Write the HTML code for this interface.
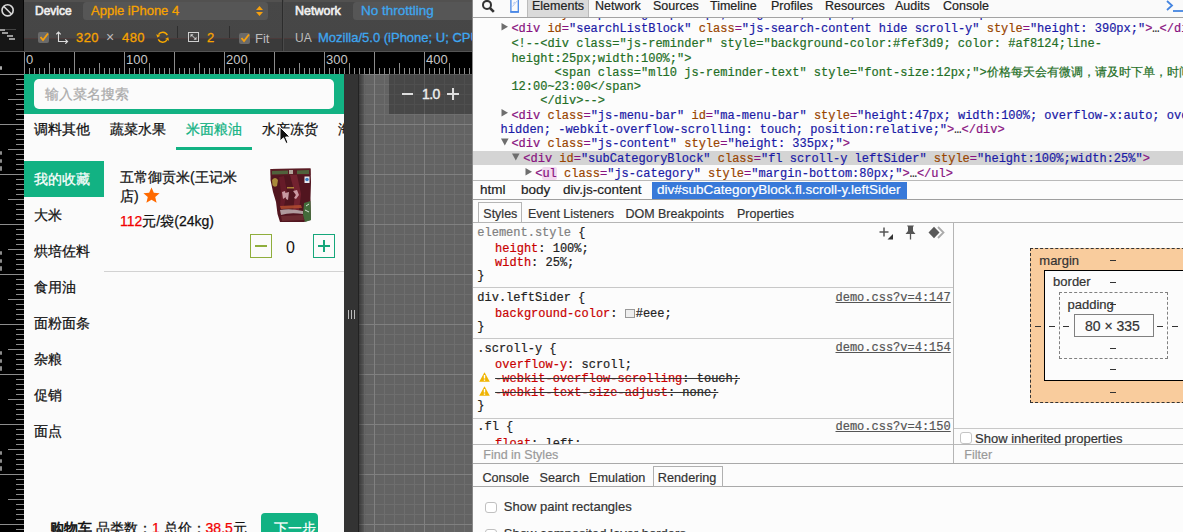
<!DOCTYPE html>
<html><head><meta charset="utf-8">
<style>
*{box-sizing:border-box}
html,body{margin:0;padding:0;width:1183px;height:532px;overflow:hidden;background:#fff;font-family:"Liberation Sans",sans-serif}
.a{position:absolute}
.mono{font-family:"Liberation Mono",monospace}
/* left panel */
#lstrip{left:0;top:0;width:24px;height:51px;background:#161616;border-right:1px solid #050505}
#rc0{left:0;top:52px;width:24px;height:22px;background:#000}
#tb{left:24px;top:0;width:448px;height:51px;background:linear-gradient(#474747 0,#464646 38px,#4b3a3a 38px,#4b3a3a 39px,#3a3a3a 39px);overflow:hidden}
.tbl{color:#f0f0f0;font-weight:normal;font-size:12.5px;-webkit-text-stroke:.6px #f0f0f0}
.dd{background:#565656;border-radius:3.5px}
.org{color:#f7a300;-webkit-text-stroke:.3px #f7a300}
.blu{color:#3ea7f0;-webkit-text-stroke:.3px #3ea7f0}
#rh{left:24px;top:52px;width:448px;height:22px;background:#000;overflow:hidden}
#rc{left:0;top:51px;width:472px;height:1px;background:#555}
#rv{left:0;top:74px;width:24px;height:458px;background:#000;overflow:hidden}
#phone{left:24px;top:74px;width:320px;height:458px;background:#fbfbfb;overflow:hidden}
#pstrip{left:344px;top:74px;width:14px;height:458px;background:#333}
#grid{left:358px;top:74px;width:114px;height:458px;background-color:#636363;
 background-image:linear-gradient(90deg,#222 0,#222 1px,rgba(0,0,0,.42) 1px,rgba(0,0,0,0) 8px),
 linear-gradient(#808080 1px,transparent 1px),linear-gradient(90deg,#808080 1px,transparent 1px),
 linear-gradient(#6e6e6e 1px,transparent 1px),linear-gradient(90deg,#6e6e6e 1px,transparent 1px);
 background-size:100% 100%,50px 50px,50px 50px,10px 10px,10px 10px;background-position:0 0,0 0,16px 0,0 0,6px 0}
#sep{left:472px;top:0;width:1px;height:532px;background:#8a8a8a}
/* devtools */
#dt{left:473px;top:0;width:710px;height:532px;background:#fcfcfc;overflow:hidden}
.dom{font-family:"Liberation Mono",monospace;font-size:12px;white-space:pre;line-height:14px}
.tg{color:#881280}.an{color:#994500}.av{color:#1a1aa6}.cm{color:#236e25}
.tri{color:#727272}
.sans{font-family:"Liberation Sans",sans-serif}
#phone div{-webkit-text-stroke-width:0.25px}
#dt div{-webkit-text-stroke-width:0.2px}
</style></head><body>

<!-- ===== LEFT PANEL ===== -->
<div id="lstrip" class="a">
 <svg class="a" style="left:0;top:3px" width="16" height="16" viewBox="0 0 16 16"><circle cx="7.6" cy="7.3" r="5.6" stroke="#d8d8d8" stroke-width="1.6" fill="none"/><path d="M3.6 3.3 L11.6 11.3" stroke="#d8d8d8" stroke-width="1.6"/></svg>
 <div class="a" style="left:0;top:29px;width:5px;height:2px;background:#9a9a9a"></div>
 <div class="a" style="left:5px;top:29px;width:11px;height:1px;background:#444"></div>
 <div class="a" style="left:2px;top:32px;width:6px;height:2px;background:#9a9a9a"></div>
 <div class="a" style="left:7px;top:35px;width:6px;height:2px;background:#9a9a9a"></div>
 <div class="a" style="left:9px;top:38px;width:6px;height:2px;background:#9a9a9a"></div>
</div>
<div id="tb" class="a">
 <div class="a" style="left:0;top:0;width:448px;height:2px;background:#525150"></div>
 <div class="a tbl" style="left:11px;top:4px;font-size:12px;line-height:14px">Device</div>
 <div class="a dd" style="left:59px;top:2px;width:185px;height:18px"></div>
 <div class="a org" style="left:67px;top:3px;font-size:13px;line-height:16px">Apple iPhone 4</div>
 <svg class="a" style="left:232px;top:6px" width="7" height="11" viewBox="0 0 7 11"><path d="M3.5 0 L7 4 L0 4Z M0 6 L7 6 L3.5 10Z" fill="#f5a00f"/></svg>
 <div class="a" style="left:258px;top:0;width:1px;height:51px;background:#2c2c2c"></div>
 <div class="a" style="left:259px;top:0;width:1px;height:51px;background:#4a4a4a"></div>
 <div class="a tbl" style="left:271px;top:4px;line-height:14px">Network</div>
 <div class="a dd" style="left:329px;top:2px;width:130px;height:18px"></div>
 <div class="a blu" style="left:337px;top:3px;font-size:13.5px;line-height:16px">No throttling</div>
 <!-- row 2 -->
 
 <div class="a" style="left:14px;top:32px;width:11px;height:11px;background:#6a6a6a;border-radius:2px"></div>
 <svg class="a" style="left:14px;top:31px" width="12" height="12" viewBox="0 0 12 12"><path d="M2.5 6 L5 9 L10 2.5" stroke="#f5a00f" stroke-width="1.8" fill="none"/></svg>
 <svg class="a" style="left:32px;top:30px" width="14" height="14" viewBox="0 0 14 14"><path d="M2.5 12 V2.2 M0.3 4.3 L2.5 2 L4.7 4.3 M2.5 11.5 H11.5 M9.3 9.3 L11.6 11.5 L9.3 13.7" stroke="#dcdcdc" stroke-width="1.1" fill="none"/></svg>
 <div class="a org" style="left:52px;top:30px;font-size:13px;line-height:16px;letter-spacing:.4px">320</div>
 <div class="a" style="left:82px;top:29px;font-size:14px;line-height:16px;color:#bdbdbd">&#215;</div>
 <div class="a org" style="left:98px;top:30px;font-size:13px;line-height:16px;letter-spacing:.4px">480</div>
 <svg class="a" style="left:132px;top:31px" width="14" height="13" viewBox="0 0 14 13"><path d="M11.33 4.09 A5 5 0 0 0 2.47 3.7 M2.27 8.31 A5 5 0 0 0 10.9 9.07" stroke="#f7a800" stroke-width="1.5" fill="none"/><path d="M1.35 6.57 L4.37 4.69 L0.23 3.19Z M12.26 6.32 L13.07 9.78 L9.09 7.92Z" fill="#f7a800"/></svg>
 <div class="a" style="left:153px;top:26px;width:1px;height:12px;background:#2e2e2e"></div>
 <div class="a" style="left:164px;top:32px;width:11px;height:10px;border:1.3px solid #cfcfcf"></div>
 <svg class="a" style="left:166px;top:34px" width="7" height="6" viewBox="0 0 7 6"><path d="M1.5 1 L5.5 5" stroke="#cfcfcf" stroke-width="1" fill="none"/><path d="M0.5 0.2 H3.5 L0.5 3.2Z M6.5 5.8 H3.5 L6.5 2.8Z" fill="#cfcfcf"/></svg>
 <div class="a org" style="left:183px;top:30px;font-size:13px;line-height:16px">2</div>
 <div class="a" style="left:205px;top:26px;width:1px;height:12px;background:#2e2e2e"></div>
 <div class="a" style="left:215px;top:32.5px;width:11px;height:11px;background:#6a6a6a;border-radius:2px"></div>
 <svg class="a" style="left:215px;top:32px" width="12" height="12" viewBox="0 0 12 12"><path d="M2.5 6 L5 9 L10 2.5" stroke="#f5a00f" stroke-width="1.8" fill="none"/></svg>
 <div class="a" style="left:231px;top:31px;font-size:13px;line-height:16px;color:#bdbdbd">Fit</div>
 <div class="a" style="left:271px;top:30px;font-size:12px;line-height:16px;color:#bdbdbd">UA</div>
 <div class="a blu" style="left:294px;top:30px;font-size:13px;line-height:16px;white-space:nowrap">Mozilla/5.0 (iPhone; U; CPU iPhone OS</div>
</div>
<div id="rc" class="a"></div><div id="rc0" class="a"><div class="a" style="left:0;top:14px;width:1.5px;height:4px;background:#aaa;border-radius:1px"></div></div>
<div id="rh" class="a"><div class="a" style="left:0px;top:0px;width:1px;height:22px;background:#8c8c8c"></div><div class="a" style="left:5px;top:16px;width:1px;height:6px;background:#8c8c8c"></div><div class="a" style="left:10px;top:16px;width:1px;height:6px;background:#8c8c8c"></div><div class="a" style="left:15px;top:16px;width:1px;height:6px;background:#8c8c8c"></div><div class="a" style="left:20px;top:16px;width:1px;height:6px;background:#8c8c8c"></div><div class="a" style="left:25px;top:11px;width:1px;height:11px;background:#8c8c8c"></div><div class="a" style="left:30px;top:16px;width:1px;height:6px;background:#8c8c8c"></div><div class="a" style="left:35px;top:16px;width:1px;height:6px;background:#8c8c8c"></div><div class="a" style="left:40px;top:16px;width:1px;height:6px;background:#8c8c8c"></div><div class="a" style="left:45px;top:16px;width:1px;height:6px;background:#8c8c8c"></div><div class="a" style="left:50px;top:0px;width:1px;height:22px;background:#8c8c8c"></div><div class="a" style="left:55px;top:16px;width:1px;height:6px;background:#8c8c8c"></div><div class="a" style="left:60px;top:16px;width:1px;height:6px;background:#8c8c8c"></div><div class="a" style="left:65px;top:16px;width:1px;height:6px;background:#8c8c8c"></div><div class="a" style="left:70px;top:16px;width:1px;height:6px;background:#8c8c8c"></div><div class="a" style="left:75px;top:11px;width:1px;height:11px;background:#8c8c8c"></div><div class="a" style="left:80px;top:16px;width:1px;height:6px;background:#8c8c8c"></div><div class="a" style="left:85px;top:16px;width:1px;height:6px;background:#8c8c8c"></div><div class="a" style="left:90px;top:16px;width:1px;height:6px;background:#8c8c8c"></div><div class="a" style="left:95px;top:16px;width:1px;height:6px;background:#8c8c8c"></div><div class="a" style="left:100px;top:0px;width:1px;height:22px;background:#8c8c8c"></div><div class="a" style="left:105px;top:16px;width:1px;height:6px;background:#8c8c8c"></div><div class="a" style="left:110px;top:16px;width:1px;height:6px;background:#8c8c8c"></div><div class="a" style="left:115px;top:16px;width:1px;height:6px;background:#8c8c8c"></div><div class="a" style="left:120px;top:16px;width:1px;height:6px;background:#8c8c8c"></div><div class="a" style="left:125px;top:11px;width:1px;height:11px;background:#8c8c8c"></div><div class="a" style="left:130px;top:16px;width:1px;height:6px;background:#8c8c8c"></div><div class="a" style="left:135px;top:16px;width:1px;height:6px;background:#8c8c8c"></div><div class="a" style="left:140px;top:16px;width:1px;height:6px;background:#8c8c8c"></div><div class="a" style="left:145px;top:16px;width:1px;height:6px;background:#8c8c8c"></div><div class="a" style="left:150px;top:0px;width:1px;height:22px;background:#8c8c8c"></div><div class="a" style="left:155px;top:16px;width:1px;height:6px;background:#8c8c8c"></div><div class="a" style="left:160px;top:16px;width:1px;height:6px;background:#8c8c8c"></div><div class="a" style="left:165px;top:16px;width:1px;height:6px;background:#8c8c8c"></div><div class="a" style="left:170px;top:16px;width:1px;height:6px;background:#8c8c8c"></div><div class="a" style="left:175px;top:11px;width:1px;height:11px;background:#8c8c8c"></div><div class="a" style="left:180px;top:16px;width:1px;height:6px;background:#8c8c8c"></div><div class="a" style="left:185px;top:16px;width:1px;height:6px;background:#8c8c8c"></div><div class="a" style="left:190px;top:16px;width:1px;height:6px;background:#8c8c8c"></div><div class="a" style="left:195px;top:16px;width:1px;height:6px;background:#8c8c8c"></div><div class="a" style="left:200px;top:0px;width:1px;height:22px;background:#8c8c8c"></div><div class="a" style="left:205px;top:16px;width:1px;height:6px;background:#8c8c8c"></div><div class="a" style="left:210px;top:16px;width:1px;height:6px;background:#8c8c8c"></div><div class="a" style="left:215px;top:16px;width:1px;height:6px;background:#8c8c8c"></div><div class="a" style="left:220px;top:16px;width:1px;height:6px;background:#8c8c8c"></div><div class="a" style="left:225px;top:11px;width:1px;height:11px;background:#8c8c8c"></div><div class="a" style="left:230px;top:16px;width:1px;height:6px;background:#8c8c8c"></div><div class="a" style="left:235px;top:16px;width:1px;height:6px;background:#8c8c8c"></div><div class="a" style="left:240px;top:16px;width:1px;height:6px;background:#8c8c8c"></div><div class="a" style="left:245px;top:16px;width:1px;height:6px;background:#8c8c8c"></div><div class="a" style="left:250px;top:0px;width:1px;height:22px;background:#8c8c8c"></div><div class="a" style="left:255px;top:16px;width:1px;height:6px;background:#8c8c8c"></div><div class="a" style="left:260px;top:16px;width:1px;height:6px;background:#8c8c8c"></div><div class="a" style="left:265px;top:16px;width:1px;height:6px;background:#8c8c8c"></div><div class="a" style="left:270px;top:16px;width:1px;height:6px;background:#8c8c8c"></div><div class="a" style="left:275px;top:11px;width:1px;height:11px;background:#8c8c8c"></div><div class="a" style="left:280px;top:16px;width:1px;height:6px;background:#8c8c8c"></div><div class="a" style="left:285px;top:16px;width:1px;height:6px;background:#8c8c8c"></div><div class="a" style="left:290px;top:16px;width:1px;height:6px;background:#8c8c8c"></div><div class="a" style="left:295px;top:16px;width:1px;height:6px;background:#8c8c8c"></div><div class="a" style="left:300px;top:0px;width:1px;height:22px;background:#8c8c8c"></div><div class="a" style="left:305px;top:16px;width:1px;height:6px;background:#8c8c8c"></div><div class="a" style="left:310px;top:16px;width:1px;height:6px;background:#8c8c8c"></div><div class="a" style="left:315px;top:16px;width:1px;height:6px;background:#8c8c8c"></div><div class="a" style="left:320px;top:16px;width:1px;height:6px;background:#8c8c8c"></div><div class="a" style="left:325px;top:11px;width:1px;height:11px;background:#8c8c8c"></div><div class="a" style="left:330px;top:16px;width:1px;height:6px;background:#8c8c8c"></div><div class="a" style="left:335px;top:16px;width:1px;height:6px;background:#8c8c8c"></div><div class="a" style="left:340px;top:16px;width:1px;height:6px;background:#8c8c8c"></div><div class="a" style="left:345px;top:16px;width:1px;height:6px;background:#8c8c8c"></div><div class="a" style="left:350px;top:0px;width:1px;height:22px;background:#8c8c8c"></div><div class="a" style="left:355px;top:16px;width:1px;height:6px;background:#8c8c8c"></div><div class="a" style="left:360px;top:16px;width:1px;height:6px;background:#8c8c8c"></div><div class="a" style="left:365px;top:16px;width:1px;height:6px;background:#8c8c8c"></div><div class="a" style="left:370px;top:16px;width:1px;height:6px;background:#8c8c8c"></div><div class="a" style="left:375px;top:11px;width:1px;height:11px;background:#8c8c8c"></div><div class="a" style="left:380px;top:16px;width:1px;height:6px;background:#8c8c8c"></div><div class="a" style="left:385px;top:16px;width:1px;height:6px;background:#8c8c8c"></div><div class="a" style="left:390px;top:16px;width:1px;height:6px;background:#8c8c8c"></div><div class="a" style="left:395px;top:16px;width:1px;height:6px;background:#8c8c8c"></div><div class="a" style="left:400px;top:0px;width:1px;height:22px;background:#8c8c8c"></div><div class="a" style="left:405px;top:16px;width:1px;height:6px;background:#8c8c8c"></div><div class="a" style="left:410px;top:16px;width:1px;height:6px;background:#8c8c8c"></div><div class="a" style="left:415px;top:16px;width:1px;height:6px;background:#8c8c8c"></div><div class="a" style="left:420px;top:16px;width:1px;height:6px;background:#8c8c8c"></div><div class="a" style="left:425px;top:11px;width:1px;height:11px;background:#8c8c8c"></div><div class="a" style="left:430px;top:16px;width:1px;height:6px;background:#8c8c8c"></div><div class="a" style="left:435px;top:16px;width:1px;height:6px;background:#8c8c8c"></div><div class="a" style="left:440px;top:16px;width:1px;height:6px;background:#8c8c8c"></div><div class="a" style="left:445px;top:16px;width:1px;height:6px;background:#8c8c8c"></div><div class="a" style="left:2px;top:1px;font-size:13px;line-height:13px;color:#c8c8c8">0</div><div class="a" style="left:102px;top:1px;font-size:13px;line-height:13px;color:#c8c8c8">100</div><div class="a" style="left:202px;top:1px;font-size:13px;line-height:13px;color:#c8c8c8">200</div><div class="a" style="left:302px;top:1px;font-size:13px;line-height:13px;color:#c8c8c8">300</div><div class="a" style="left:402px;top:1px;font-size:13px;line-height:13px;color:#c8c8c8">400</div></div>
<div id="rv" class="a"><div class="a" style="left:0;top:77px;width:1.5px;height:4px;background:#8c8c8c;border-radius:1px"></div><div class="a" style="left:0;top:85px;width:1.5px;height:3.5px;background:#8c8c8c;border-radius:1px"></div><div class="a" style="left:0;top:91.5px;width:1.5px;height:5.0px;background:#8c8c8c;border-radius:1px"></div><div class="a" style="left:0;top:177px;width:1.5px;height:4px;background:#8c8c8c;border-radius:1px"></div><div class="a" style="left:0;top:185px;width:1.5px;height:3.5px;background:#8c8c8c;border-radius:1px"></div><div class="a" style="left:0;top:191.5px;width:1.5px;height:5.0px;background:#8c8c8c;border-radius:1px"></div><div class="a" style="left:0;top:277px;width:1.5px;height:4px;background:#8c8c8c;border-radius:1px"></div><div class="a" style="left:0;top:285px;width:1.5px;height:3.5px;background:#8c8c8c;border-radius:1px"></div><div class="a" style="left:0;top:291.5px;width:1.5px;height:5.0px;background:#8c8c8c;border-radius:1px"></div><div class="a" style="left:0;top:377px;width:1.5px;height:4px;background:#8c8c8c;border-radius:1px"></div><div class="a" style="left:0;top:385px;width:1.5px;height:3.5px;background:#8c8c8c;border-radius:1px"></div><div class="a" style="left:0;top:391.5px;width:1.5px;height:5.0px;background:#8c8c8c;border-radius:1px"></div><div class="a" style="left:0px;top:0px;width:24px;height:1px;background:#8c8c8c"></div><div class="a" style="left:16px;top:5px;width:8px;height:1px;background:#8c8c8c"></div><div class="a" style="left:16px;top:10px;width:8px;height:1px;background:#8c8c8c"></div><div class="a" style="left:16px;top:15px;width:8px;height:1px;background:#8c8c8c"></div><div class="a" style="left:16px;top:20px;width:8px;height:1px;background:#8c8c8c"></div><div class="a" style="left:8px;top:25px;width:16px;height:1px;background:#8c8c8c"></div><div class="a" style="left:16px;top:30px;width:8px;height:1px;background:#8c8c8c"></div><div class="a" style="left:16px;top:35px;width:8px;height:1px;background:#8c8c8c"></div><div class="a" style="left:16px;top:40px;width:8px;height:1px;background:#8c8c8c"></div><div class="a" style="left:16px;top:45px;width:8px;height:1px;background:#8c8c8c"></div><div class="a" style="left:0px;top:50px;width:24px;height:1px;background:#8c8c8c"></div><div class="a" style="left:16px;top:55px;width:8px;height:1px;background:#8c8c8c"></div><div class="a" style="left:16px;top:60px;width:8px;height:1px;background:#8c8c8c"></div><div class="a" style="left:16px;top:65px;width:8px;height:1px;background:#8c8c8c"></div><div class="a" style="left:16px;top:70px;width:8px;height:1px;background:#8c8c8c"></div><div class="a" style="left:8px;top:75px;width:16px;height:1px;background:#8c8c8c"></div><div class="a" style="left:16px;top:80px;width:8px;height:1px;background:#8c8c8c"></div><div class="a" style="left:16px;top:85px;width:8px;height:1px;background:#8c8c8c"></div><div class="a" style="left:16px;top:90px;width:8px;height:1px;background:#8c8c8c"></div><div class="a" style="left:16px;top:95px;width:8px;height:1px;background:#8c8c8c"></div><div class="a" style="left:0px;top:100px;width:24px;height:1px;background:#8c8c8c"></div><div class="a" style="left:16px;top:105px;width:8px;height:1px;background:#8c8c8c"></div><div class="a" style="left:16px;top:110px;width:8px;height:1px;background:#8c8c8c"></div><div class="a" style="left:16px;top:115px;width:8px;height:1px;background:#8c8c8c"></div><div class="a" style="left:16px;top:120px;width:8px;height:1px;background:#8c8c8c"></div><div class="a" style="left:8px;top:125px;width:16px;height:1px;background:#8c8c8c"></div><div class="a" style="left:16px;top:130px;width:8px;height:1px;background:#8c8c8c"></div><div class="a" style="left:16px;top:135px;width:8px;height:1px;background:#8c8c8c"></div><div class="a" style="left:16px;top:140px;width:8px;height:1px;background:#8c8c8c"></div><div class="a" style="left:16px;top:145px;width:8px;height:1px;background:#8c8c8c"></div><div class="a" style="left:0px;top:150px;width:24px;height:1px;background:#8c8c8c"></div><div class="a" style="left:16px;top:155px;width:8px;height:1px;background:#8c8c8c"></div><div class="a" style="left:16px;top:160px;width:8px;height:1px;background:#8c8c8c"></div><div class="a" style="left:16px;top:165px;width:8px;height:1px;background:#8c8c8c"></div><div class="a" style="left:16px;top:170px;width:8px;height:1px;background:#8c8c8c"></div><div class="a" style="left:8px;top:175px;width:16px;height:1px;background:#8c8c8c"></div><div class="a" style="left:16px;top:180px;width:8px;height:1px;background:#8c8c8c"></div><div class="a" style="left:16px;top:185px;width:8px;height:1px;background:#8c8c8c"></div><div class="a" style="left:16px;top:190px;width:8px;height:1px;background:#8c8c8c"></div><div class="a" style="left:16px;top:195px;width:8px;height:1px;background:#8c8c8c"></div><div class="a" style="left:0px;top:200px;width:24px;height:1px;background:#8c8c8c"></div><div class="a" style="left:16px;top:205px;width:8px;height:1px;background:#8c8c8c"></div><div class="a" style="left:16px;top:210px;width:8px;height:1px;background:#8c8c8c"></div><div class="a" style="left:16px;top:215px;width:8px;height:1px;background:#8c8c8c"></div><div class="a" style="left:16px;top:220px;width:8px;height:1px;background:#8c8c8c"></div><div class="a" style="left:8px;top:225px;width:16px;height:1px;background:#8c8c8c"></div><div class="a" style="left:16px;top:230px;width:8px;height:1px;background:#8c8c8c"></div><div class="a" style="left:16px;top:235px;width:8px;height:1px;background:#8c8c8c"></div><div class="a" style="left:16px;top:240px;width:8px;height:1px;background:#8c8c8c"></div><div class="a" style="left:16px;top:245px;width:8px;height:1px;background:#8c8c8c"></div><div class="a" style="left:0px;top:250px;width:24px;height:1px;background:#8c8c8c"></div><div class="a" style="left:16px;top:255px;width:8px;height:1px;background:#8c8c8c"></div><div class="a" style="left:16px;top:260px;width:8px;height:1px;background:#8c8c8c"></div><div class="a" style="left:16px;top:265px;width:8px;height:1px;background:#8c8c8c"></div><div class="a" style="left:16px;top:270px;width:8px;height:1px;background:#8c8c8c"></div><div class="a" style="left:8px;top:275px;width:16px;height:1px;background:#8c8c8c"></div><div class="a" style="left:16px;top:280px;width:8px;height:1px;background:#8c8c8c"></div><div class="a" style="left:16px;top:285px;width:8px;height:1px;background:#8c8c8c"></div><div class="a" style="left:16px;top:290px;width:8px;height:1px;background:#8c8c8c"></div><div class="a" style="left:16px;top:295px;width:8px;height:1px;background:#8c8c8c"></div><div class="a" style="left:0px;top:300px;width:24px;height:1px;background:#8c8c8c"></div><div class="a" style="left:16px;top:305px;width:8px;height:1px;background:#8c8c8c"></div><div class="a" style="left:16px;top:310px;width:8px;height:1px;background:#8c8c8c"></div><div class="a" style="left:16px;top:315px;width:8px;height:1px;background:#8c8c8c"></div><div class="a" style="left:16px;top:320px;width:8px;height:1px;background:#8c8c8c"></div><div class="a" style="left:8px;top:325px;width:16px;height:1px;background:#8c8c8c"></div><div class="a" style="left:16px;top:330px;width:8px;height:1px;background:#8c8c8c"></div><div class="a" style="left:16px;top:335px;width:8px;height:1px;background:#8c8c8c"></div><div class="a" style="left:16px;top:340px;width:8px;height:1px;background:#8c8c8c"></div><div class="a" style="left:16px;top:345px;width:8px;height:1px;background:#8c8c8c"></div><div class="a" style="left:0px;top:350px;width:24px;height:1px;background:#8c8c8c"></div><div class="a" style="left:16px;top:355px;width:8px;height:1px;background:#8c8c8c"></div><div class="a" style="left:16px;top:360px;width:8px;height:1px;background:#8c8c8c"></div><div class="a" style="left:16px;top:365px;width:8px;height:1px;background:#8c8c8c"></div><div class="a" style="left:16px;top:370px;width:8px;height:1px;background:#8c8c8c"></div><div class="a" style="left:8px;top:375px;width:16px;height:1px;background:#8c8c8c"></div><div class="a" style="left:16px;top:380px;width:8px;height:1px;background:#8c8c8c"></div><div class="a" style="left:16px;top:385px;width:8px;height:1px;background:#8c8c8c"></div><div class="a" style="left:16px;top:390px;width:8px;height:1px;background:#8c8c8c"></div><div class="a" style="left:16px;top:395px;width:8px;height:1px;background:#8c8c8c"></div><div class="a" style="left:0px;top:400px;width:24px;height:1px;background:#8c8c8c"></div><div class="a" style="left:16px;top:405px;width:8px;height:1px;background:#8c8c8c"></div><div class="a" style="left:16px;top:410px;width:8px;height:1px;background:#8c8c8c"></div><div class="a" style="left:16px;top:415px;width:8px;height:1px;background:#8c8c8c"></div><div class="a" style="left:16px;top:420px;width:8px;height:1px;background:#8c8c8c"></div><div class="a" style="left:8px;top:425px;width:16px;height:1px;background:#8c8c8c"></div><div class="a" style="left:16px;top:430px;width:8px;height:1px;background:#8c8c8c"></div><div class="a" style="left:16px;top:435px;width:8px;height:1px;background:#8c8c8c"></div><div class="a" style="left:16px;top:440px;width:8px;height:1px;background:#8c8c8c"></div><div class="a" style="left:16px;top:445px;width:8px;height:1px;background:#8c8c8c"></div><div class="a" style="left:0px;top:450px;width:24px;height:1px;background:#8c8c8c"></div><div class="a" style="left:16px;top:455px;width:8px;height:1px;background:#8c8c8c"></div></div>
<div id="phone" class="a">
 <div class="a" style="left:0;top:0;width:320px;height:40px;background:#12b283"></div>
 <div class="a" style="left:10px;top:5px;width:300px;height:30px;background:#fbfbfb;border-radius:5px"></div>
 <div class="a" style="left:21px;top:12px;font-size:14px;line-height:16px;color:#ababab">输入菜名搜索</div>
 <div class="a" style="left:10px;top:47px;font-size:14px;line-height:16px;color:#111">调料其他</div>
 <div class="a" style="left:86px;top:47px;font-size:14px;line-height:16px;color:#111">蔬菜水果</div>
 <div class="a" style="left:162px;top:47px;font-size:14px;line-height:16px;color:#12b283">米面粮油</div>
 <div class="a" style="left:152px;top:73px;width:76px;height:3px;background:#12b283"></div>
 <div class="a" style="left:238px;top:47px;font-size:14px;line-height:16px;color:#111">水产冻货</div>
 <div class="a" style="left:314px;top:47px;font-size:14px;line-height:16px;color:#111;white-space:nowrap">海鲜冻品</div>
 <!-- sidebar -->
 <div class="a" style="left:0;top:87px;width:80px;height:36px;background:#12b283"></div>
 <div class="a" style="left:10px;top:97px;font-size:14px;line-height:16px;color:#fff">我的收藏</div>
 <div class="a" style="left:10px;top:133px;font-size:14px;line-height:16px;color:#111">大米</div>
 <div class="a" style="left:10px;top:169px;font-size:14px;line-height:16px;color:#111">烘培佐料</div>
 <div class="a" style="left:10px;top:205px;font-size:14px;line-height:16px;color:#111">食用油</div>
 <div class="a" style="left:10px;top:241px;font-size:14px;line-height:16px;color:#111">面粉面条</div>
 <div class="a" style="left:10px;top:277px;font-size:14px;line-height:16px;color:#111">杂粮</div>
 <div class="a" style="left:10px;top:313px;font-size:14px;line-height:16px;color:#111">促销</div>
 <div class="a" style="left:10px;top:349px;font-size:14px;line-height:16px;color:#111">面点</div>
 <!-- product -->
 <div class="a" style="left:96px;top:93.5px;font-size:14px;line-height:19px;color:#111;width:130px">五常御贡米(王记米<br>店)</div>
 <svg class="a" style="left:119px;top:113px" width="17" height="17" viewBox="0 0 16 16"><path d="M8 0.5 L10.2 5.5 L15.6 5.9 L11.5 9.4 L12.8 14.8 L8 11.9 L3.2 14.8 L4.5 9.4 L0.4 5.9 L5.8 5.5Z" fill="#ff6a00"/></svg>
 <div class="a" style="left:96px;top:139px;font-size:14px;line-height:16px;color:#111"><span style="color:#f10000">112</span>元/袋(24kg)</div>
 <!-- rice bag image -->
 <svg class="a" style="left:246px;top:94px" width="42" height="55" viewBox="0 0 42 55">
  <path d="M0.5 1 L40.5 0.5 L41 14 L40.5 30 L41 52 L34 54 L10 54 L7.5 46 L6 34 L3 24 L0.5 12Z" fill="#51151f"/>
  <path d="M0.5 1 L40.5 0.5 L40.5 7 L0.8 7.5Z" fill="#5a1c24"/>
  <path d="M2 3 L18 2.5 L18 6 L2 6.5Z" fill="#4e7a44" opacity=".75"/>
  <path d="M27 2.5 L39 2 L39 6 L27 6Z" fill="#4e7a44" opacity=".75"/>
  <path d="M19 2 L23 2 L23 6 L19 6Z" fill="#d8e0d0" opacity=".7"/>
  <path d="M20 7 L27 7 L31 26 L29 42 L23 44 L25 26Z" fill="#8a2c3a" opacity=".6"/>
  <path d="M9 9 L14 8 L17 24 L14 38 L10 40 L11 24Z" fill="#74202e" opacity=".6"/>
  <path d="M2 12 Q5 8 8 12 L7 18 Q4 20 2.5 17Z" fill="#a88a3a"/>
  <rect x="34.5" y="8.5" width="5" height="6.5" fill="#e6ecf2"/>
  <circle cx="37" cy="11.5" r="1.8" fill="#3d7ec0"/>
  <path d="M17 19 H24 V20.5 H17Z" fill="#c9a640" opacity=".75"/>
  <path d="M12 24 L15 23 L16 29 L13 31 Z M15 25 L19 24 L18 32 L16 31Z M23 23 L27 22 L29 27 L26 31 L24 30 L26 27Z" fill="#e2b8bf" opacity=".8"/>
  <path d="M10 38 L31 37 L32 40 L11 41Z" fill="#b8502f" opacity=".8"/>
  <path d="M10 42 Q20 40 33 43 L33 46 Q20 44 11 47Z" fill="#bfb2b4" opacity=".85"/>
  <path d="M11 48 L33 47 L34 52 L12 53Z" fill="#6a2a30"/>
  <path d="M34 35 L40.5 33 L41 52 L35 54 L33 47Z" fill="#3f7a40" opacity=".85"/>
  <path d="M36 38 L39 36 M35 42 L39 44" stroke="#e8f0e8" stroke-width=".9"/>
 </svg>
 <div class="a" style="left:226px;top:160px;width:22px;height:24px;border:1px solid #8fae3c"></div>
 <div class="a" style="left:231px;top:171px;width:12px;height:2px;background:#8fae3c"></div>
 <div class="a" style="left:262px;top:165px;font-size:16px;line-height:18px;color:#111;-webkit-text-stroke-width:0">0</div>
 <div class="a" style="left:289px;top:160px;width:22px;height:24px;border:1px solid #16a77b"></div>
 <div class="a" style="left:294px;top:171px;width:12px;height:2px;background:#16a77b"></div>
 <div class="a" style="left:299px;top:166px;width:2px;height:12px;background:#16a77b"></div>
 <div class="a" style="left:80px;top:197px;width:240px;height:1px;background:#d2d2d2"></div>
 <!-- cart -->
 <div class="a" style="left:26px;top:446px;font-size:14px;line-height:16px;color:#111;white-space:nowrap"><span style="-webkit-text-stroke-width:.6px">购物车</span> 品类数：<span style="color:#f10000">1</span> 总价：<span style="color:#f10000">38.5</span>元</div>
 <div class="a" style="left:237px;top:439px;width:57px;height:30px;background:#12b283;border-radius:4px"></div>
 <div class="a" style="left:250px;top:446px;font-size:14px;line-height:16px;color:#fff">下一步</div>
 <!-- cursor -->
 <svg class="a" style="left:255px;top:52px" width="12" height="19" viewBox="0 0 12 19"><path d="M1 1 L1 15 L4.5 11.8 L7 17.5 L9 16.6 L6.6 11 L11 11Z" fill="#111" stroke="#fff" stroke-width="1"/></svg>
</div>
<div id="pstrip" class="a">
 <div class="a" style="left:4px;top:236px;width:1px;height:9px;background:#bbb"></div>
 <div class="a" style="left:7px;top:236px;width:1px;height:9px;background:#bbb"></div>
 <div class="a" style="left:10px;top:236px;width:1px;height:9px;background:#bbb"></div>
</div>
<div id="grid" class="a">
 <div class="a" style="left:31px;top:0;width:83px;height:40px;background:rgba(0,0,0,.28)"></div>
 <div class="a" style="left:44px;top:19px;width:11px;height:2px;background:#ddd"></div>
 <div class="a" style="left:64px;top:12px;font-size:14px;line-height:16px;color:#eee;letter-spacing:-.6px;-webkit-text-stroke:.4px #eee">1.0</div>
 <div class="a" style="left:89px;top:19px;width:12px;height:2px;background:#ddd"></div>
 <div class="a" style="left:94px;top:14px;width:2px;height:12px;background:#ddd"></div>
</div>
<div id="sep" class="a"></div>

<!-- ===== DEVTOOLS ===== -->
<div id="dt" class="a">
<div class="a" style="left:0;top:151px;width:710px;height:14px;background:#d4d4d4"></div>
<div class="a" style="left:69px;top:167px;width:15px;height:13px;background:#f2d9ef;border-radius:2px"></div>
<div class="a dom" style="left:38.4px;top:7.2px;height:14px"><span class="tg">&lt;div</span> <span class="an">style</span><span class="tg">=</span><span class="av">&quot;padding:10px 10px; height:40; top:0; border:0 solid 1px&quot;</span><span class="tg">&gt;</span></div>
<svg class="a" style="left:27.8px;top:23.4px" width="8" height="8" viewBox="0 0 8 8"><path d="M0.5 0 V7.4 L7 3.7Z" fill="#6e6e6e"/></svg>
<div class="a dom" style="left:38.4px;top:21.7px;height:14px"><span class="tg">&lt;div</span> <span class="an">id</span><span class="tg">=</span><span class="av">&quot;searchListBlock&quot;</span> <span class="an">class</span><span class="tg">=</span><span class="av">&quot;js-search-content hide scroll-y&quot;</span> <span class="an">style</span><span class="tg">=</span><span class="av">&quot;height: 390px;&quot;</span><span class="tg">&gt;</span><span style="color:#222">…</span><span class="tg">&lt;/div&gt;</span></div>
<div class="a dom" style="left:38.4px;top:37.3px;height:14px"><span class="cm">&lt;!--&lt;div class=&quot;js-reminder&quot; style=&quot;background-color:#fef3d9; color: #af8124;line-</span></div>
<div class="a dom" style="left:38.4px;top:51.7px;height:14px"><span class="cm">height:25px;width:100%;&quot;&gt;</span></div>
<div class="a dom" style="left:38.4px;top:65.9px;height:14px"><span class="cm">      &lt;span class=&quot;ml10 js-reminder-text&quot; style=&quot;font-size:12px;&quot;&gt;价格每天会有微调，请及时下单，时间</span></div>
<div class="a dom" style="left:38.4px;top:80.1px;height:14px"><span class="cm">12:00~23:00&lt;/span&gt;</span></div>
<div class="a dom" style="left:38.4px;top:94.3px;height:14px"><span class="cm">    &lt;/div&gt;--&gt;</span></div>
<svg class="a" style="left:27.8px;top:109.3px" width="8" height="8" viewBox="0 0 8 8"><path d="M0.5 0 V7.4 L7 3.7Z" fill="#6e6e6e"/></svg>
<div class="a dom" style="left:38.4px;top:108.6px;height:14px"><span class="tg">&lt;div</span> <span class="an">class</span><span class="tg">=</span><span class="av">&quot;js-menu-bar&quot;</span> <span class="an">id</span><span class="tg">=</span><span class="av">&quot;ma-menu-bar&quot;</span> <span class="an">style</span><span class="tg">=</span><span class="av">&quot;height:47px; width:100%; overflow-x:auto; overflow-y:</span></div>
<div class="a dom" style="left:27.6px;top:122.6px;height:14px"><span class="av">hidden; -webkit-overflow-scrolling: touch; position:relative;&quot;</span><span class="tg">&gt;</span><span style="color:#222">…</span><span class="tg">&lt;/div&gt;</span></div>
<svg class="a" style="left:27.6px;top:138.4px" width="8" height="8" viewBox="0 0 8 8"><path d="M0 0.5 H7.6 L3.8 7.5Z" fill="#6e6e6e"/></svg>
<div class="a dom" style="left:38.4px;top:137.2px;height:14px"><span class="tg">&lt;div</span> <span class="an">class</span><span class="tg">=</span><span class="av">&quot;js-content&quot;</span> <span class="an">style</span><span class="tg">=</span><span class="av">&quot;height: 335px;&quot;</span><span class="tg">&gt;</span></div>
<svg class="a" style="left:39.0px;top:153.2px" width="8" height="8" viewBox="0 0 8 8"><path d="M0 0.5 H7.6 L3.8 7.5Z" fill="#6e6e6e"/></svg>
<div class="a dom" style="left:50.3px;top:152.0px;height:14px"><span class="tg">&lt;div</span> <span class="an">id</span><span class="tg">=</span><span class="av">&quot;subCategoryBlock&quot;</span> <span class="an">class</span><span class="tg">=</span><span class="av">&quot;fl scroll-y leftSider&quot;</span> <span class="an">style</span><span class="tg">=</span><span class="av">&quot;height:100%;width:25%&quot;</span><span class="tg">&gt;</span></div>
<svg class="a" style="left:52.3px;top:167.5px" width="8" height="8" viewBox="0 0 8 8"><path d="M0.5 0 V7.4 L7 3.7Z" fill="#6e6e6e"/></svg>
<div class="a dom" style="left:62.2px;top:166.8px;height:14px"><span class="tg">&lt;ul</span> <span class="an">class</span><span class="tg">=</span><span class="av">&quot;js-category&quot;</span> <span class="an">style</span><span class="tg">=</span><span class="av">&quot;margin-bottom:80px;&quot;</span><span class="tg">&gt;</span><span style="color:#222">…</span><span class="tg">&lt;/ul&gt;</span></div>
 <!-- tab bar -->
 <div class="a" style="left:0;top:0;width:710px;height:18px;background:#fafafa;border-bottom:1px solid #a3a3a3"></div>
 <svg class="a" style="left:8px;top:0" width="15" height="15" viewBox="0 0 15 15"><circle cx="6" cy="4.9" r="4" stroke="#333" stroke-width="2" fill="none"/><path d="M8.8 7.8 L12.8 11.8" stroke="#333" stroke-width="2.6"/></svg>
 <svg class="a" style="left:37px;top:0" width="10" height="14" viewBox="0 0 10 14"><path d="M0.9 -2 V12 H8.3 V-2" stroke="#4a88e6" stroke-width="1.3" fill="none"/><path d="M0.4 11.8 H8.8" stroke="#4a88e6" stroke-width="1.6"/><path d="M2.5 6.5 L7 1 M3 3.5 L5 2" stroke="#9fb8ee" stroke-width=".8"/></svg>
 <div class="a" style="left:54px;top:0;width:1px;height:17px;background:#bbb"></div>
 <div class="a" style="left:55px;top:0;width:61px;height:17px;background:#dadada;border-right:1px solid #bbb"></div>
 <div class="a" style="left:59px;top:0;font-size:12.5px;line-height:12px;color:#222">Elements</div>
 <div class="a" style="left:122px;top:0;font-size:12.5px;line-height:12px;color:#222">Network</div>
 <div class="a" style="left:180px;top:0;font-size:12.5px;line-height:12px;color:#222">Sources</div>
 <div class="a" style="left:237px;top:0;font-size:12.5px;line-height:12px;color:#222">Timeline</div>
 <div class="a" style="left:298px;top:0;font-size:12.5px;line-height:12px;color:#222">Profiles</div>
 <div class="a" style="left:352px;top:0;font-size:12.5px;line-height:12px;color:#222">Resources</div>
 <div class="a" style="left:422px;top:0;font-size:12.5px;line-height:12px;color:#222">Audits</div>
 <div class="a" style="left:470px;top:0;font-size:12.5px;line-height:12px;color:#222">Console</div>
 <svg class="a" style="left:693px;top:0" width="17" height="14" viewBox="0 0 17 14"><path d="M1 1 L6 5.5 L1 10" stroke="#4585e0" stroke-width="1.8" fill="none"/><path d="M7 11 H17" stroke="#4585e0" stroke-width="1.8"/></svg>
<div class="a" style="left:0;top:200px;width:710px;height:23px;background:#fcfcfc;border-bottom:1px solid #b5b5b5"></div>
<div class="a" style="left:5px;top:202px;width:44px;height:21px;background:#fcfcfc;border:1px solid #b5b5b5"></div>
<div class="a" style="left:10.3px;top:207px;font-size:12.5px;line-height:15px;color:#333">Styles</div>
<div class="a" style="left:54.9px;top:207px;font-size:12.5px;line-height:15px;color:#333">Event Listeners</div>
<div class="a" style="left:152.4px;top:207px;font-size:12.5px;line-height:15px;color:#333">DOM Breakpoints</div>
<div class="a" style="left:264.0px;top:207px;font-size:12.5px;line-height:15px;color:#333">Properties</div>
<div class="a dom" style="left:4.3px;top:226.3px;height:14px"><span style="color:#808080">element.style</span> <span style="color:#222">{</span></div>
<div class="a dom" style="left:22.1px;top:242.1px;height:14px"><span style="color:#c80000">height</span><span style="color:#222">: 100%;</span></div>
<div class="a dom" style="left:22.1px;top:255.8px;height:14px"><span style="color:#c80000">width</span><span style="color:#222">: 25%;</span></div>
<div class="a dom" style="left:4.3px;top:268.7px;height:14px"><span style="color:#222">}</span></div>
<div class="a" style="left:0px;top:287px;width:480px;height:1px;background:#c8c8c8"></div>
<div class="a dom" style="left:4.3px;top:290.5px;height:14px"><span style="color:#222">div.leftSider {</span></div>
<div class="a dom" style="left:362.5px;top:290.7px;height:14px;color:#555;text-decoration:underline">demo.css?v=4:147</div>
<div class="a dom" style="left:22.1px;top:307.3px;height:14px"><span style="color:#c80000">background-color</span><span style="color:#222">: </span><span style="display:inline-block;width:10px;height:9px;border:1px solid #999;background:#eee;vertical-align:-1px;margin-right:1px"></span><span style="color:#222">#eee;</span></div>
<div class="a dom" style="left:4.3px;top:320.1px;height:14px"><span style="color:#222">}</span></div>
<div class="a" style="left:0px;top:338px;width:480px;height:1px;background:#c8c8c8"></div>
<div class="a dom" style="left:4.3px;top:341.8px;height:14px"><span style="color:#222">.scroll-y {</span></div>
<div class="a dom" style="left:362.5px;top:341.0px;height:14px;color:#555;text-decoration:underline">demo.css?v=4:154</div>
<div class="a dom" style="left:22.1px;top:358.0px;height:14px"><span style="color:#c80000">overflow-y</span><span style="color:#222">: scroll;</span></div>
<div class="a dom" style="left:22.1px;top:371.6px;height:14px"><span style="text-decoration:line-through;text-decoration-color:#333"><span style="color:#c80000">-webkit-overflow-scrolling</span><span style="color:#222">: touch;</span></span></div>
<div class="a dom" style="left:22.1px;top:386.4px;height:14px"><span style="text-decoration:line-through;text-decoration-color:#333"><span style="color:#c80000">-webkit-text-size-adjust</span><span style="color:#222">: none;</span></span></div>
<svg class="a" style="left:6px;top:372.3px" width="11" height="10" viewBox="0 0 11 10"><path d="M5.5 0.3 L10.8 9.7 H0.2Z" fill="#f0b400"/><path d="M5.5 3 V6.5 M5.5 7.6 V8.8" stroke="#fff" stroke-width="1.4"/></svg>
<svg class="a" style="left:6px;top:386.1px" width="11" height="10" viewBox="0 0 11 10"><path d="M5.5 0.3 L10.8 9.7 H0.2Z" fill="#f0b400"/><path d="M5.5 3 V6.5 M5.5 7.6 V8.8" stroke="#fff" stroke-width="1.4"/></svg>
<div class="a dom" style="left:4.3px;top:399.2px;height:14px"><span style="color:#222">}</span></div>
<div class="a" style="left:0px;top:418px;width:480px;height:1px;background:#c8c8c8"></div>
<div class="a dom" style="left:4.3px;top:419.9px;height:14px"><span style="color:#222">.fl {</span></div>
<div class="a dom" style="left:362.5px;top:420.1px;height:14px;color:#555;text-decoration:underline">demo.css?v=4:150</div>
<div class="a dom" style="left:22.1px;top:436.8px;height:14px"><span style="color:#c80000">float</span><span style="color:#222">: left;</span></div>
<svg class="a" style="left:406px;top:226px" width="15" height="14" viewBox="0 0 15 14"><path d="M5 1.5 V10.5 M0.5 6 H9.5" stroke="#555" stroke-width="1.5"/><path d="M8.5 13.5 L14 13.5 L14 8Z" fill="#333"/></svg>
<svg class="a" style="left:432px;top:225px" width="11" height="15" viewBox="0 0 11 15"><path d="M2 0.5 H9 L8 2 V6 L10.5 9 H0.5 L3 6 V2Z" fill="#555"/><path d="M5.5 9 V14.5" stroke="#555" stroke-width="1.3"/></svg>
<svg class="a" style="left:455px;top:226px" width="17" height="13" viewBox="0 0 17 13"><path d="M6 0.8 L11.5 6.5 L6 12.2 L0.5 6.5Z" fill="#595959"/><path d="M10 1 L15.5 6.5 L10 12" stroke="#aaa" stroke-width="1.8" fill="none"/></svg>
<div class="a" style="left:0;top:444px;width:710px;height:20px;background:#fcfcfc;border-top:1px solid #b9b9b9;border-bottom:1px solid #a9a9a9"></div>
<div class="a" style="left:10.300000000000011px;top:448px;font-size:12.5px;line-height:15px;color:#9a9a9a">Find in Styles</div>
<div class="a" style="left:480px;top:222px;width:1px;height:242px;background:#b5b5b5"></div>
<div class="a" style="left:557px;top:248px;width:170px;height:155px;background:#f9cc9d;border:1px dashed #333"></div>
<div class="a" style="left:571px;top:270px;width:150px;height:111px;background:#fcfcfc;border:1px solid #000"></div>
<div class="a" style="left:586px;top:292px;width:109px;height:67px;border:1px dashed #808080"></div>
<div class="a" style="left:601px;top:314px;width:80px;height:23px;border:1px solid #808080"></div>
<div class="a" style="left:566.3px;top:253.0px;font-size:13px;line-height:15px;color:#333;white-space:nowrap">margin</div>
<div class="a" style="left:580.1px;top:274.4px;font-size:13px;line-height:15px;color:#333;white-space:nowrap">border</div>
<div class="a" style="left:594.5px;top:296.8px;font-size:13px;line-height:15px;color:#333;white-space:nowrap">padding</div>
<div class="a" style="left:612.0px;top:318.5px;font-size:14px;line-height:15px;color:#333;white-space:nowrap">80 × 335</div>
<div class="a" style="left:636.7px;top:259.8px;width:6px;height:1px;background:#333"></div>
<div class="a" style="left:636.7px;top:281.5px;width:6px;height:1px;background:#333"></div>
<div class="a" style="left:636.7px;top:304.0px;width:6px;height:1px;background:#333"></div>
<div class="a" style="left:636.7px;top:348.0px;width:6px;height:1px;background:#333"></div>
<div class="a" style="left:636.7px;top:369.4px;width:6px;height:1px;background:#333"></div>
<div class="a" style="left:636.7px;top:391.8px;width:6px;height:1px;background:#333"></div>
<div class="a" style="left:561.6px;top:325.6px;width:6px;height:1px;background:#333"></div>
<div class="a" style="left:576.0px;top:325.6px;width:6px;height:1px;background:#333"></div>
<div class="a" style="left:590.3px;top:325.6px;width:6px;height:1px;background:#333"></div>
<div class="a" style="left:683.7px;top:325.6px;width:6px;height:1px;background:#333"></div>
<div class="a" style="left:699.0px;top:325.6px;width:6px;height:1px;background:#333"></div>
<div class="a" style="left:481px;top:428px;width:229px;height:1px;background:#c8c8c8"></div>
<div class="a" style="left:487px;top:432px;width:12px;height:12px;border:1px solid #c4c4c4;border-radius:3px;background:#fff"></div>
<div class="a" style="left:502px;top:431px;font-size:13px;line-height:15px;color:#333">Show inherited properties</div>
<div class="a" style="left:491.3px;top:448px;font-size:12.5px;line-height:15px;color:#9a9a9a">Filter</div>
<div class="a" style="left:0;top:463px;width:710px;height:24px;background:#fcfcfc;border-top:1px solid #a9a9a9;border-bottom:1px solid #a9a9a9"></div>
<div class="a" style="left:180px;top:466px;width:70px;height:21px;background:#fcfcfc;border:1px solid #b0b0b0"></div>
<div class="a" style="left:9.4px;top:471px;font-size:12.7px;line-height:15px;color:#333">Console</div>
<div class="a" style="left:66.5px;top:471px;font-size:12.7px;line-height:15px;color:#333">Search</div>
<div class="a" style="left:116.0px;top:471px;font-size:12.7px;line-height:15px;color:#333">Emulation</div>
<div class="a" style="left:184.8px;top:471px;font-size:12.7px;line-height:15px;color:#333">Rendering</div>
<div class="a" style="left:12px;top:502px;width:12px;height:11px;border:1px solid #c0c0c0;border-radius:3px;background:#fff"></div>
<div class="a" style="left:30.8px;top:499px;font-size:13px;line-height:15px;color:#333">Show paint rectangles</div>
<div class="a" style="left:12px;top:529px;width:12px;height:11px;border:1px solid #c0c0c0;border-radius:3px;background:#fff"></div>
<div class="a" style="left:30.8px;top:526px;font-size:13px;line-height:15px;color:#333">Show composited layer borders</div>
 <!-- breadcrumbs -->
 <div class="a" style="left:0;top:180px;width:710px;height:20px;background:#fcfcfc;border-top:1px solid #b9b9b9;border-bottom:1px solid #9f9f9f"></div>
 <div class="a" style="left:179px;top:182px;width:255px;height:17px;background:#3879d9"></div>
 <div class="a" style="left:7px;top:181px;font-size:13.5px;line-height:17px;color:#222">html</div>
 <div class="a" style="left:48px;top:181px;font-size:13.5px;line-height:17px;color:#222">body</div>
 <div class="a" style="left:90px;top:181px;font-size:13.5px;line-height:17px;color:#222">div.js-content</div>
 <div class="a" style="left:184px;top:181px;font-size:13.5px;line-height:17px;color:#fff">div#subCategoryBlock.fl.scroll-y.leftSider</div>
</div>

</body></html>
